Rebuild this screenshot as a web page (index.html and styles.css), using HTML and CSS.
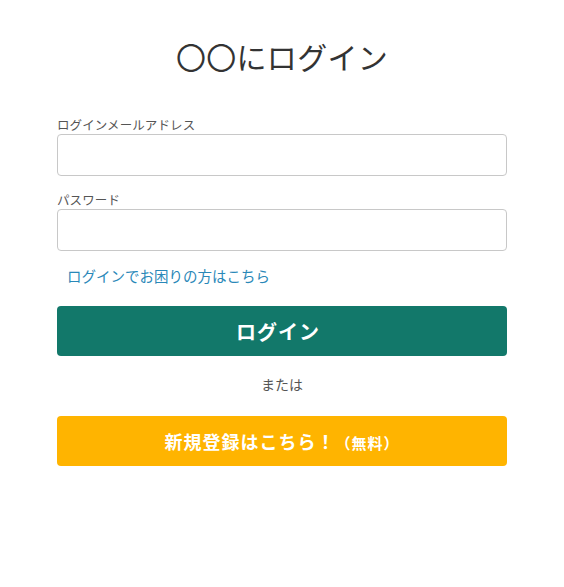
FILE: index.html
```html
<!DOCTYPE html>
<html lang="ja">
<head>
<meta charset="utf-8">
<link rel="stylesheet" href="styles.css">
</head>
<body>
<main class="page">
  <h1 class="title">〇〇にログイン</h1>
  <form class="form">
    <label class="label">ログインメールアドレス</label>
    <input class="input" type="text">
    <label class="label label-pw">パスワード</label>
    <input class="input" type="password">
    <a class="help" href="#">ログインでお困りの方はこちら</a>
    <button class="btn btn-login" type="button">ログイン</button>
    <p class="or">または</p>
    <button class="btn btn-signup" type="button">新規登録はこちら！<span class="free">（無料）</span></button>
  </form>
</main>
</body>
</html>
```
FILE: styles.css
```css
html, body {
  margin: 0;
  padding: 0;
  background: #fff;
}
body {
  font-family: "Noto Sans CJK JP", "Noto Sans", sans-serif;
  color: #333;
}
.page {
  width: 450px;
  margin: 0 auto;
  padding-top: 34px;
}
.title {
  margin: 0;
  font-size: 30px;
  font-weight: 400;
  line-height: 45px;
  text-align: center;
  color: #333;
  letter-spacing: 0.3px;
}
.form {
  display: flex;
  flex-direction: column;
  margin-top: 36px;
}
.label {
  font-size: 12.5px;
  line-height: 19px;
  color: #555;
  letter-spacing: 0.1px;
}
.label-pw {
  margin-top: 14px;
}
.input {
  box-sizing: border-box;
  height: 42px;
  width: 100%;
  margin: 0;
  border: 1px solid #c8c8c8;
  border-radius: 4px;
  background: #fff;
}
.help {
  margin-top: 14px;
  margin-left: 10px;
  font-size: 14.5px;
  line-height: 22px;
  color: #2a88b8;
  text-decoration: none;
}
.btn {
  height: 50px;
  width: 100%;
  border: none;
  border-radius: 4px;
  color: #fff;
  font-family: inherit;
  font-weight: 700;
  padding: 0;
}
.btn-login {
  margin-top: 19px;
  background: #12786a;
  font-size: 20px;
  letter-spacing: 1px;
  padding-right: 8px;
}
.or {
  margin: 18px 0 0;
  font-size: 14px;
  line-height: 21px;
  text-align: center;
  color: #555;
}
.btn-signup {
  margin-top: 21px;
  background: #ffb400;
  font-size: 18px;
  letter-spacing: 1px;
}
.free {
  font-size: 15px;
}
```
